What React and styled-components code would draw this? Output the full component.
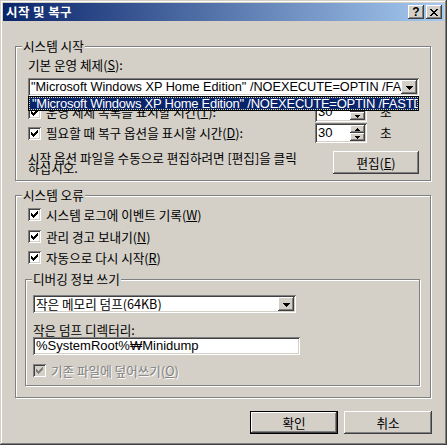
import React from 'react';
import styled, { createGlobalStyle, css } from 'styled-components';

const GlobalStyle = createGlobalStyle`
  html, body {
    margin: 0;
    padding: 0;
    background: #d4d0c8;
  }
  body {
    font-family: "Noto Sans CJK KR", "Liberation Sans", sans-serif;
    font-size: 12.6px;
    color: #000;
  }
  * {
    box-sizing: border-box;
  }
`;

const raised = css`
  background: #d4d0c8;
  box-shadow: inset -1px -1px #404040, inset 1px 1px #fff, inset -2px -2px #808080, inset 2px 2px #d4d0c8;
`;

const sunken = css`
  box-shadow: inset 1px 1px #808080, inset -1px -1px #fff, inset 2px 2px #404040, inset -2px -2px #d4d0c8;
`;

const CHECK = ['......X', '.....XX', 'X...XXX', 'XX.XXX.', 'XXXXX..', '.XXX...', '..X....'];
const CLOSE = ['XX....XX', '.XX..XX.', '..XXXX..', '...XX...', '..XXXX..', '.XX..XX.', 'XX....XX'];
const DOWN = ['XXXXXXX', '.XXXXX.', '..XXX..', '...X...'];
const SMALL_UP = ['..X..', '.XXX.', 'XXXXX'];
const SMALL_DOWN = ['XXXXX', '.XXX.', '..X..'];

const PixelIcon = ({ rows, color = '#000' }) => (
  <svg width={rows[0].length} height={rows.length} shapeRendering="crispEdges" style={{ display: 'block' }}>
    {rows.flatMap((r, y) =>
      [...r].map((c, x) =>
        c === 'X' ? <rect key={`${x}-${y}`} x={x} y={y} width="1" height="1" fill={color} /> : null
      )
    )}
  </svg>
);

const Window = styled.div`
  width: 447px;
  height: 445px;
  padding: 3px;
  background: #d4d0c8;
  box-shadow: inset -1px -1px #404040, inset 1px 1px #d4d0c8, inset -2px -2px #808080, inset 2px 2px #fff;
  display: flex;
  flex-direction: column;
`;

const TitleBar = styled.div`
  height: 18px;
  flex: none;
  display: flex;
  align-items: center;
  padding: 0 2px 0 3px;
  background: linear-gradient(to right, #0a246a, #a6caf0);
`;

const Title = styled.div`
  flex: 1;
  color: #fff;
  font-weight: bold;
  font-size: 12.5px;
  line-height: 18px;
  letter-spacing: 0.4px;
`;

const TitleButton = styled.div`
  ${raised};
  width: 16px;
  height: 14px;
  margin-left: ${(p) => (p.$gap ? 2 : 0)}px;
  display: flex;
  align-items: center;
  justify-content: center;
  font-family: "Liberation Sans", sans-serif;
  font-weight: bold;
  font-size: 12px;
  line-height: 14px;
`;

const Body = styled.div`
  flex: 1;
  display: flex;
  flex-direction: column;
  padding: 25px 13px 0 12px;
`;

const GroupBox = styled.div`
  border: 1px solid #808080;
  box-shadow: inset 1px 1px #fff, 1px 1px #fff;
  display: flex;
  flex-direction: column;
  padding: 0 ${(p) => p.$pr}px ${(p) => p.$pb}px ${(p) => p.$pl}px;
  margin: ${(p) => p.$margin || '0'};
`;

const Legend = styled.div`
  align-self: flex-start;
  margin: -8px 0 0 ${(p) => p.$ml}px;
  padding: 0 1px;
  line-height: 14px;
  background: #d4d0c8;
`;

const FieldLabel = styled.div`
  line-height: 14px;
  margin-top: ${(p) => p.$mt}px;
`;

const ComboWrap = styled.div`
  position: relative;
  margin-top: ${(p) => p.$mt}px;
  width: ${(p) => p.$w || '100%'};
`;

const Combo = styled.div`
  ${sunken};
  background: #fff;
  height: 18px;
  padding: 2px;
  display: flex;
`;

const ComboText = styled.div`
  flex: 1;
  overflow: hidden;
  white-space: nowrap;
  padding-left: 1px;
  line-height: 14px;
  font-family: ${(p) => (p.$latin ? '"Liberation Sans", sans-serif' : 'inherit')};
  font-size: ${(p) => (p.$latin ? '12.7px' : '12.6px')};
`;

const DropButton = styled.div`
  ${raised};
  width: 16px;
  height: 14px;
  flex: none;
  display: flex;
  align-items: center;
  justify-content: center;
  padding-top: 1px;
`;

const DropList = styled.div`
  position: absolute;
  top: 100%;
  left: 0;
  right: 0;
  z-index: 2;
  height: 15px;
  border: 1px solid #000;
  background: #fff;
  overflow: hidden;
`;

const ListItem = styled.div`
  height: 13px;
  background: #0a246a;
  color: #fff;
  outline: 1px dotted #d8d8a0;
  outline-offset: -1px;
  padding-left: 3px;
  white-space: nowrap;
  font-family: "Liberation Sans", sans-serif;
  font-size: 13px;
  line-height: 13px;
  letter-spacing: -0.25px;
`;

const SpinRow = styled.div`
  display: flex;
  align-items: center;
  height: 20px;
  margin-top: ${(p) => p.$mt}px;
`;

const CheckRow = styled.div`
  display: flex;
  align-items: center;
  height: 15px;
  margin-top: ${(p) => p.$mt}px;
`;

const CheckBox = styled.span`
  width: 13px;
  height: 13px;
  flex: none;
  background: ${(p) => (p.$disabled ? '#d4d0c8' : '#fff')};
  ${sunken};
  display: flex;
  align-items: center;
  justify-content: center;
`;

const CheckText = styled.span`
  margin-left: 5px;
  line-height: 14px;
  white-space: nowrap;
  width: ${(p) => p.$w || 'auto'};
  color: ${(p) => (p.$disabled ? '#808080' : '#000')};
  text-shadow: ${(p) => (p.$disabled ? '1px 1px #fff' : 'none')};
`;

const Spinner = styled.div`
  ${sunken};
  background: #fff;
  width: 52px;
  height: 20px;
  padding: 2px;
  display: flex;
`;

const SpinValue = styled.div`
  flex: 1;
  font-family: "Liberation Sans", sans-serif;
  font-size: 13px;
  line-height: 16px;
  padding-left: 1px;
`;

const SpinButtons = styled.div`
  width: 15px;
  display: flex;
  flex-direction: column;
`;

const SpinHalf = styled.div`
  ${raised};
  flex: 1;
  display: flex;
  align-items: center;
  justify-content: center;
`;

const Unit = styled.span`
  margin-left: 13px;
  line-height: 14px;
`;

const EditRow = styled.div`
  display: flex;
  justify-content: space-between;
  align-items: flex-start;
  margin-top: 8px;
`;

const Hint = styled.div`
  width: 296px;
  line-height: 10px;
  padding-top: 2px;
  word-break: keep-all;
`;

const Button = styled.div`
  ${raised};
  width: ${(p) => p.$w}px;
  height: 23px;
  display: flex;
  align-items: center;
  justify-content: center;
  line-height: 14px;
  ${(p) =>
    p.$default &&
    css`
      box-shadow: inset 0 0 0 1px #000, inset -2px -2px #404040, inset 2px 2px #fff, inset -3px -3px #808080;
    `}
`;

const TextField = styled.div`
  ${sunken};
  background: #fff;
  width: ${(p) => p.$w}px;
  height: 18px;
  padding: 2px 3px;
  font-family: "Liberation Sans", "Noto Sans CJK KR", sans-serif;
  font-size: 13px;
  line-height: 14px;
  white-space: nowrap;
  overflow: hidden;
`;

const ButtonBar = styled.div`
  display: flex;
  justify-content: flex-end;
  gap: 6px;
  margin: 13px -1px 0 0;
`;

const BOOT = '"Microsoft Windows XP Home Edition" /NOEXECUTE=OPTIN /FASTDETECT';

const Check = ({ disabled }) => (
  <CheckBox $disabled={disabled}>
    <PixelIcon rows={CHECK} color={disabled ? '#808080' : '#000'} />
  </CheckBox>
);

const TimeSpinner = () => (
  <Spinner>
    <SpinValue>30</SpinValue>
    <SpinButtons>
      <SpinHalf>
        <PixelIcon rows={SMALL_UP} />
      </SpinHalf>
      <SpinHalf>
        <PixelIcon rows={SMALL_DOWN} />
      </SpinHalf>
    </SpinButtons>
  </Spinner>
);

export default function App() {
  return (
    <>
      <GlobalStyle />
      <Window>
        <TitleBar>
          <Title>시작 및 복구</Title>
          <TitleButton>?</TitleButton>
          <TitleButton $gap>
            <PixelIcon rows={CLOSE} />
          </TitleButton>
        </TitleBar>

        <Body>
          <GroupBox $pl={12} $pr={11} $pb={6}>
            <Legend $ml={-6}>시스템 시작</Legend>
            <FieldLabel $mt={5}>
              기본 운영 체제(<u>S</u>):
            </FieldLabel>
            <ComboWrap $mt={6}>
              <Combo>
                <ComboText $latin>{BOOT}</ComboText>
                <DropButton>
                  <PixelIcon rows={DOWN} />
                </DropButton>
              </Combo>
              <DropList>
                <ListItem>{BOOT}</ListItem>
              </DropList>
            </ComboWrap>
            <SpinRow $mt={6}>
              <Check />
              <CheckText $w="269px">
                운영 체제 목록을 표시할 시간(<u>T</u>):
              </CheckText>
              <TimeSpinner />
              <Unit>초</Unit>
            </SpinRow>
            <SpinRow $mt={1}>
              <Check />
              <CheckText $w="269px">
                필요할 때 복구 옵션을 표시할 시간(<u>D</u>):
              </CheckText>
              <TimeSpinner />
              <Unit>초</Unit>
            </SpinRow>
            <EditRow>
              <Hint>시작 옵션 파일을 수동으로 편집하려면 [편집]을 클릭 하십시오.</Hint>
              <Button $w={86}>
                편집(<u>E</u>)
              </Button>
            </EditRow>
          </GroupBox>

          <GroupBox $pl={12} $pr={11} $pb={11} $margin="14px 0 0 0">
            <Legend $ml={-6}>시스템 오류</Legend>
            <CheckRow $mt={5}>
              <Check />
              <CheckText>
                시스템 로그에 이벤트 기록(<u>W</u>)
              </CheckText>
            </CheckRow>
            <CheckRow $mt={7}>
              <Check />
              <CheckText>
                관리 경고 보내기(<u>N</u>)
              </CheckText>
            </CheckRow>
            <CheckRow $mt={6}>
              <Check />
              <CheckText>
                자동으로 다시 시작(<u>R</u>)
              </CheckText>
            </CheckRow>

            <GroupBox $pl={7} $pr={7} $pb={7} $margin="14px -1px 0 -3px">
              <Legend $ml={-1}>디버깅 정보 쓰기</Legend>
              <ComboWrap $mt={9} $w="263px">
                <Combo>
                  <ComboText>작은 메모리 덤프(64KB)</ComboText>
                  <DropButton>
                    <PixelIcon rows={DOWN} />
                  </DropButton>
                </Combo>
              </ComboWrap>
              <FieldLabel $mt={10}>작은 덤프 디렉터리:</FieldLabel>
              <TextField $w={267}>%SystemRoot%₩Minidump</TextField>
              <CheckRow $mt={8}>
                <Check disabled />
                <CheckText $disabled>
                  기존 파일에 덮어쓰기(<u>O</u>)
                </CheckText>
              </CheckRow>
            </GroupBox>
          </GroupBox>

          <ButtonBar>
            <Button $w={88} $default>
              확인
            </Button>
            <Button $w={88}>취소</Button>
          </ButtonBar>
        </Body>
      </Window>
    </>
  );
}
